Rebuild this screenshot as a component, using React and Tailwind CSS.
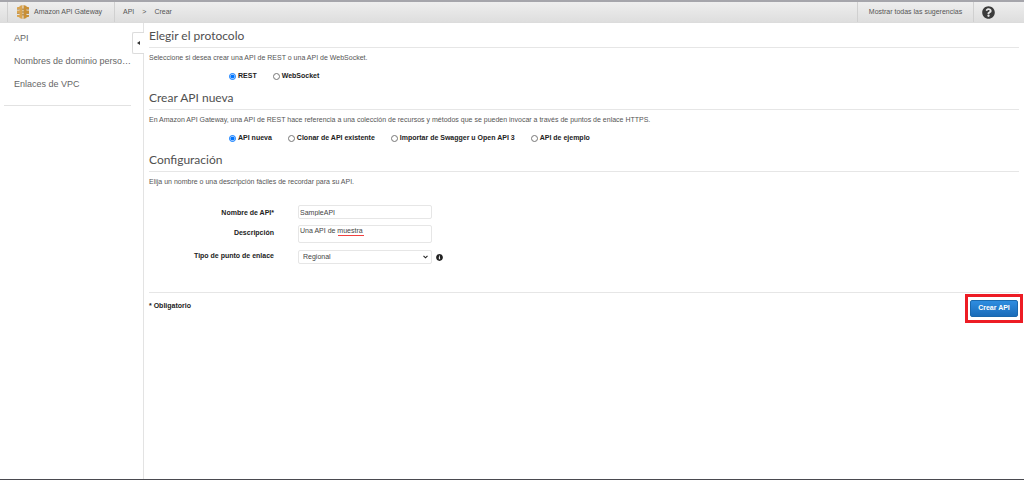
import { FaInfoCircle, FaQuestionCircle } from "react-icons/fa";

const protocols = ["REST", "WebSocket"];
const sources = [
  "API nueva",
  "Clonar de API existente",
  "Importar de Swagger u Open API 3",
  "API de ejemplo",
];

const Logo = () => (
  <svg viewBox="0 0 12 14" className="w-3 h-3.5" aria-hidden="true">
    <path fill="#d9a450" d="M2.500 1l3-1v14l-3-1zM0 2.200l2.500-.5V4H0zM0 5.500h2.500v3H0zM0 10h2.500v2.300L0 11.800z" />
    <path fill="#c98f35" d="M6.500 0l3 1v12l-3 1zM9.500 1.700l2.500.5V4H9.500zM9.500 5.500H12v3H9.500zM9.500 10H12v1.800l-2.500.5z" />
    <path fill="#9a6a20" d="M5.500 3.500h1V5h-1zM5.500 6.300h1v1.500h-1zM5.500 9h1v1.500h-1zM0 4h2.500v.6H0zM9.500 4H12v.6H9.500zM0 8.500h2.500V9H0zM9.500 8.500H12V9H9.500z" />
  </svg>
);

const Section = ({ title, text, children }) => (
  <section>
    <h2 className="h-[22px] border-b border-[#e6e6e6] font-[Lato,sans-serif] text-[12px] leading-5 text-[#505050]">
      {title}
    </h2>
    <p className="pt-1 text-[#555] leading-3">{text}</p>
    {children}
  </section>
);

const RadioGroup = ({ name, label, options }) => (
  <div role="radiogroup" aria-label={label} className="flex gap-4 pt-1.5 pl-20 h-6">
    {options.map((o, i) => (
      <label key={o} className="flex items-center gap-0.5 h-3 font-bold text-[#222]">
        <input type="radio" name={name} defaultChecked={i === 0} className="w-[7px] h-[7px] accent-[#0075ff]" />
        {o}
      </label>
    ))}
  </div>
);

const fieldClass = "block w-[134px] border border-[#e6e6e6] rounded-xs bg-white text-[#444]";
const labelClass = "text-right font-bold text-[#222]";

export default function App() {
  return (
    <div className="flex flex-col min-h-screen bg-white border-t-2 border-t-[#a5a5ab] border-b border-b-[#4a4a50] font-['Liberation_Sans',Arial,sans-serif] text-[7px]">
      <header className="flex items-stretch h-[21px] bg-linear-to-b from-[#eeeeee] to-[#dedede] border-b border-[#dcdcdc] text-[#555]">
        <div className="w-2 border-r border-[#d0d0d0]" />
        <a href="#" className="flex items-center gap-[5px] w-[107px] pl-[9px] border-r border-[#d0d0d0] whitespace-nowrap">
          <Logo />
          Amazon API Gateway
        </a>
        <nav aria-label="Ruta" className="flex items-center gap-2 pl-2">
          <a href="#">API</a>
          <span>&gt;</span>
          <span>Crear</span>
        </nav>
        <button className="ml-auto w-[117px] border-x border-[#d0d0d0]">Mostrar todas las sugerencias</button>
        <button aria-label="Ayuda" className="w-[50px] pl-2 text-[#3b3b3b]">
          <FaQuestionCircle size={13} />
        </button>
      </header>

      <div className="flex grow">
        <aside className="relative w-36 shrink-0 border-r border-[#e3e3e3] pl-1 pr-3">
          <nav aria-label="Secciones" className="flex flex-col gap-[11px] pt-[9px] pb-[15px] pl-2.5 border-b border-[#e2e2e2] text-[9px] leading-3 text-[#666]">
            <a href="#">API</a>
            <a href="#" className="whitespace-nowrap">Nombres de dominio perso…</a>
            <a href="#">Enlaces de VPC</a>
          </nav>
          <button
            aria-label="Contraer"
            className="absolute -right-px top-[9px] flex items-center justify-center w-3 h-[22px] bg-white border border-r-0 border-[#dcdcdc] rounded-l-xs"
          >
            <svg viewBox="0 0 3 4" className="w-[3px] h-1">
              <path d="M3 0v4L0 2z" fill="#333" />
            </svg>
          </button>
        </aside>

        <main className="grow px-[5px] pt-[3px]">
          <Section title="Elegir el protocolo" text="Seleccione si desea crear una API de REST o una API de WebSocket.">
            <RadioGroup name="protocol" label="Protocolo" options={protocols} />
          </Section>
          <Section
            title="Crear API nueva"
            text="En Amazon API Gateway, una API de REST hace referencia a una colección de recursos y métodos que se pueden invocar a través de puntos de enlace HTTPS."
          >
            <RadioGroup name="source" label="Origen" options={sources} />
          </Section>

          <form onSubmit={(e) => e.preventDefault()}>
            <Section title="Configuración" text="Elija un nombre o una descripción fáciles de recordar para su API.">
              <div className="grid grid-cols-[125px_1fr] gap-x-6 pt-[17px] pb-7">
                <label htmlFor="name" className={`${labelClass} h-5 leading-4`}>
                  Nombre de API*
                </label>
                <div>
                  <input id="name" defaultValue="SampleAPI" className={`${fieldClass} h-3.5 px-px`} />
                </div>
                <label htmlFor="description" className={`${labelClass} h-[25px] leading-4`}>
                  Descripción
                </label>
                <div className="relative">
                  <textarea
                    id="description"
                    rows={1}
                    spellCheck={false}
                    defaultValue="Una API de muestra"
                    className={`${fieldClass} h-[18px] px-px leading-[10px] resize-none overflow-hidden`}
                  />
                  {/* spelling mark under the last word */}
                  <div className="absolute left-10 top-2.5 w-[26px] border-b border-[#f04040]" />
                </div>
                <label htmlFor="endpoint" className={`${labelClass} leading-3`}>
                  Tipo de punto de enlace
                </label>
                <div className="flex items-center gap-1">
                  <div className="relative">
                    <select id="endpoint" className={`${fieldClass} h-3.5 pl-1 appearance-none`}>
                      <option>Regional</option>
                    </select>
                    <svg viewBox="0 0 5 4" className="absolute right-1 top-[5px] w-[5px] h-1 pointer-events-none">
                      <path d="M.5.8l2 2 2-2" fill="none" stroke="#222" strokeWidth="1.1" />
                    </svg>
                  </div>
                  <FaInfoCircle size={7} color="#222" />
                </div>
              </div>
            </Section>

            <div className="flex items-start justify-between border-t border-[#e6e6e6]">
              <p className="pt-[7px] leading-3 font-bold text-[#222]">* Obligatorio</p>
              <div className="-mr-1 mt-px px-0.5 py-[3px] border-3 border-[#ed1c24]">
                <button className="block w-12 h-[17px] rounded-xs border border-[#1a68ad] bg-linear-to-b from-[#2e8de0] to-[#1a6cba] font-bold text-white">
                  Crear API
                </button>
              </div>
            </div>
          </form>
        </main>
      </div>
    </div>
  );
}
